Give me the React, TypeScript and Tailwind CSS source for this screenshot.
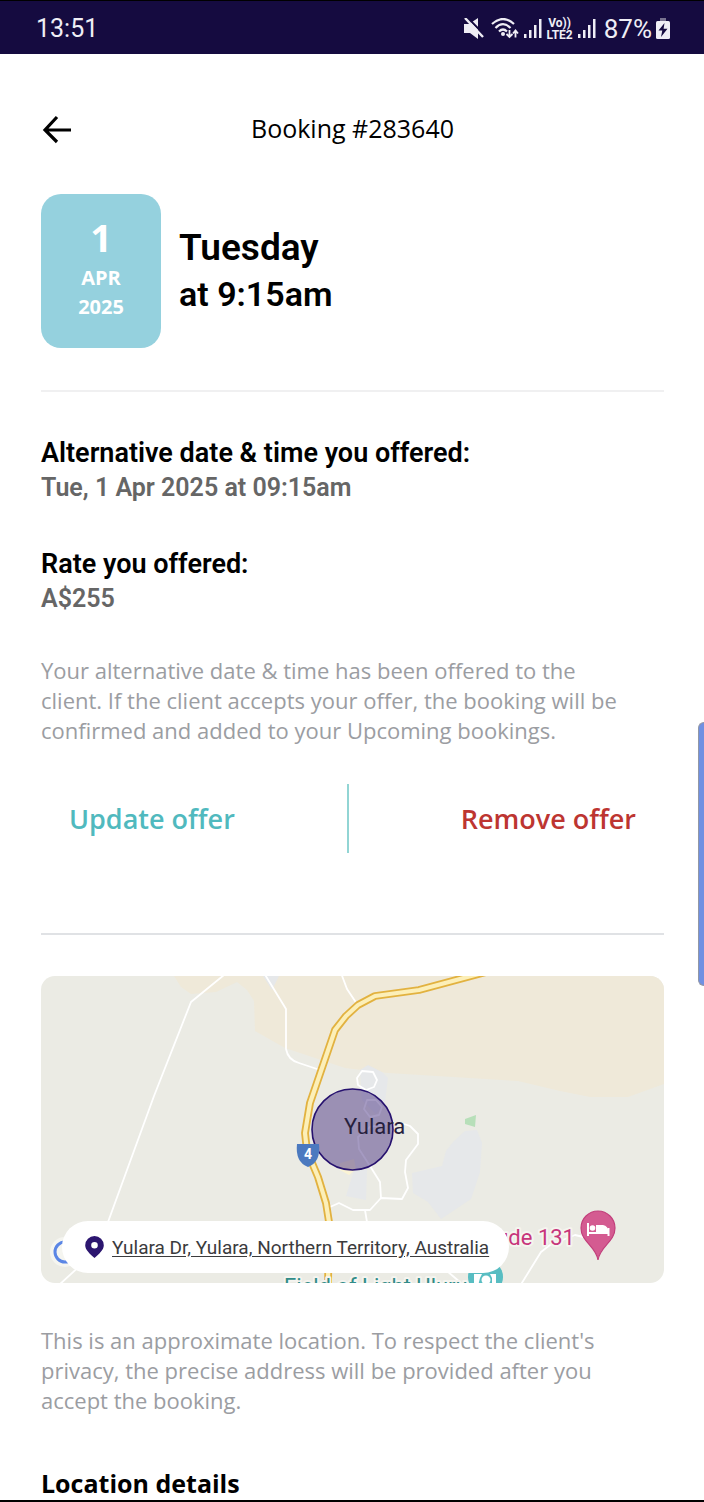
import type { ReactNode } from "react";

function SignalBars() {
  return (
    <svg className="ml-[5px]" width="18" height="20" viewBox="0 0 18 20" fill="#efeef5" aria-hidden="true">
      <rect x="0" y="15" width="2.500" height="4" />
      <rect x="5" y="11" width="2.500" height="8" />
      <rect x="10" y="6" width="2.500" height="13" />
      <rect x="15" y="0" width="2.500" height="19" />
    </svg>
  );
}

function StatusBar() {
  return (
    <header className="flex h-[54px] items-center justify-between border-t border-black bg-[#150b40] pl-9 pr-[34px] pt-[2px] font-['Roboto',sans-serif] text-[25px] leading-8 text-[#efeef5]">
      <span>13:51</span>
      <div className="flex items-center">
        <svg width="20" height="22" viewBox="0 0 20 22" aria-label="Muted">
          <path d="M0 6H5L14 0V21L6 15H0Z" fill="#efeef5" />
          <path d="M3 -1L22 18.500" stroke="#150b40" strokeWidth="2" />
          <path d="M1 0L19 19" stroke="#efeef5" strokeWidth="2.400" />
        </svg>
        <svg className="ml-[7px]" width="28" height="22" viewBox="0 0 28 22" fill="none" aria-label="Wi-Fi">
          <g stroke="#efeef5" strokeWidth="2.200">
            <path d="M1 6Q12 -4 23 6" />
            <path d="M4.500 10Q12 2.500 19.500 10" />
            <path d="M8 13.500Q12 9.500 16 13.500" />
          </g>
          <circle cx="12" cy="16" r="2" fill="#efeef5" />
          <g stroke="#efeef5" strokeWidth="1.800">
            <path d="M18.500 12V18.500M15.500 16L18.500 19L21.500 16" />
            <path d="M24.500 19.500V13M22 15.500L24.500 12.500L27 15.500" />
          </g>
        </svg>
        <SignalBars />
        <span className="ml-1 flex flex-col items-center text-[12px] font-bold leading-[12px]">
          <span>Vo))</span>
          <span>LTE2</span>
        </span>
        <SignalBars />
        <span className="ml-2 text-[26px]">87%</span>
        <svg className="ml-[4px]" width="14" height="22" viewBox="0 0 14 22" aria-label="Charging">
          <rect x="4" y="0" width="6" height="4" fill="#77728f" />
          <rect x="0" y="3" width="14" height="18" rx="1.500" fill="#efeef5" />
          <path d="M8.500 5L2.500 12.500H6.300L5 19L11.500 10.700H7.600Z" fill="#150b40" />
        </svg>
      </div>
    </header>
  );
}

function DateCard() {
  return (
    <div className="flex h-[154px] w-[120px] flex-col items-center rounded-[20px] bg-[#95d1de] pt-[17px] font-bold text-white">
      <span className="text-[38px] leading-[52px]">1</span>
      <span className="text-xl leading-[29px]">APR</span>
      <span className="text-xl leading-[29px]">2025</span>
    </div>
  );
}

function Detail({ label, children }: { label: string; children: ReactNode }) {
  return (
    <div className="font-['Roboto',sans-serif] font-semibold">
      <dt className="text-[27px] leading-9 text-black">{label}</dt>
      <dd className="text-[25px] leading-[34px] text-[#666666]">{children}</dd>
    </div>
  );
}

const HIGHWAY =
  "M486 972L419 990L375 996L358 1005L346 1016L335 1030L310 1103L305 1133L307 1151L318 1177L326 1203L329 1222L328 1286";

function AreaMap() {
  return (
    <svg
      className="block h-full w-full"
      viewBox="41 976 623 307"
      preserveAspectRatio="xMidYMid slice"
      role="img"
      aria-label="Map of Yulara"
    >
      <rect x="41" y="976" width="623" height="307" fill="#ebebe4" />
      {/* Desert */}
      <path
        d="M174 976L181 987L191 994L216 992L237 982L247 990L254 1001L255 1031L285 1048L318 1059L345 1068L388 1073L518 1081L560 1091L590 1097L628 1097L664 1084V976Z"
        fill="#efe9d9"
      />
      {/* Town areas */}
      <g fill="#e6e8ea">
        <path d="M263 976H279L272 990Z" />
        <path d="M360 1070L368 1065L382 1072L388 1078L385 1102L376 1114L362 1100Z" />
        <path d="M453 1142L465 1131L477 1130L482 1143L480 1172L471 1199L441 1219L428 1202L413 1193L412 1173L442 1166L446 1151Z" />
        <path d="M354 1170L367 1170L366 1200L346 1196Z" />
      </g>
      <path d="M340 1163L354 1159L356 1169L349 1175L340 1170Z" fill="#fbf4d4" />
      <path d="M465 1119L476 1115L475 1127L465 1124Z" fill="#b7dfb9" />
      {/* Minor roads */}
      <g fill="none" stroke="#ffffff" strokeWidth="1.800" strokeLinejoin="round">
        <path d="M224 975L191 1002L154 1096L108 1222" />
        <path d="M264 973L286 1009L286 1049Q288 1060 299 1063L320 1070" />
        <path d="M341 973L347 989L357 1004" />
        <path d="M362 1071L373 1072L377 1080L374 1087L366 1090L358 1085L357 1078Z" />
        <path d="M367 1100L376 1100L382 1107L379 1115L370 1117L364 1109Z" />
        <path d="M404 1124L410 1126L418 1134L418 1144L406 1160L405 1172L408 1188L402 1199L381 1198L370 1210L353 1210L339 1203L330 1207" />
        <path d="M381 1198L380 1182L370 1166L359 1149L358 1137L370 1127L390 1123" />
        <path d="M365 1210L367 1222M59 1285L83 1263" />
        <path d="M520 1286L541 1252L550 1245L575 1235L596 1240" />
        <path d="M447 1271L461 1283" />
      </g>
      {/* Highway */}
      <g fill="none" strokeLinejoin="round">
        <path d={HIGHWAY} stroke="#e2b240" strokeWidth="7.800" />
        <path d={HIGHWAY} stroke="#fcefb8" strokeWidth="4.200" />
      </g>
      {/* Approximate location */}
      <circle cx="352.500" cy="1129.500" r="40.500" fill="#422c80" fillOpacity="0.480" stroke="#27126f" strokeWidth="1.600" />
      <path d="M297 1144H319Q321 1162 308 1167Q295 1162 297 1144Z" fill="#4b79bf" />
      <text x="308" y="1159" textAnchor="middle" fill="#ffffff" fontFamily="Roboto, sans-serif" fontSize="14" fontWeight="700">4</text>
      <text x="344" y="1134" fill="#27203d" fontFamily="Roboto, sans-serif" fontSize="22">Yulara</text>
      {/* Places */}
      <circle cx="65" cy="1252" r="15" fill="#f5f5f0" />
      <circle cx="65" cy="1252" r="10" fill="none" stroke="#5b86e5" strokeWidth="3" />
      <text x="575" y="1245" textAnchor="end" fill="#c7357b" stroke="#f5f4ef" strokeWidth="4" strokeLinejoin="round" paintOrder="stroke" fontFamily="Roboto, sans-serif" fontSize="22">ude 131</text>
      <path d="M598 1260C596 1246 581 1242 581 1228A17 17 0 0 1 615 1228C615 1242 600 1246 598 1260Z" fill="#d45b91" stroke="#c23f7b" strokeWidth="1.200" />
      <path d="M588 1223V1236M588 1233H608.500M608.500 1236V1228" stroke="#ffffff" strokeWidth="2" fill="none" />
      <path d="M596 1232V1225H603Q608 1226 609 1232Z" fill="#ffffff" />
      <circle cx="592.500" cy="1228" r="2.800" fill="#ffffff" />
      <text x="284" y="1294" fill="#318c88" stroke="#f5f4ef" strokeWidth="4" strokeLinejoin="round" paintOrder="stroke" fontFamily="Roboto, sans-serif" fontSize="22">Field of Light Uluru</text>
      <circle cx="485.500" cy="1277" r="17.500" fill="#58bdc2" />
      <path d="M474 1274H482L480 1278L478 1286H474ZM490 1274H496V1286H492V1278Z" fill="#ffffff" />
      <circle cx="486" cy="1280" r="4.500" fill="#ffffff" />
    </svg>
  );
}

export default function App() {
  return (
    <div className="relative overflow-hidden border-b-2 border-black bg-white font-['Open_Sans',sans-serif] text-black">
      <StatusBar />
      <main className="pb-px pl-[41px] pr-10">
        <div className="grid h-[140px] grid-cols-[30px_1fr_30px] items-center pt-2">
          <button type="button" aria-label="Back" className="cursor-pointer">
            <svg width="30" height="32" viewBox="0 0 30 32" fill="none" stroke="#000000" strokeWidth="3.200">
              <path d="M30 18H4M16 5L4 18L16 30" />
            </svg>
          </button>
          <h1 className="text-center text-[25px] leading-8">Booking #283640</h1>
        </div>

        <section className="flex items-center gap-[18px] border-b-2 border-[#f0f0f1] pb-[42px]">
          <DateCard />
          <h2 className="font-['Roboto',sans-serif] font-semibold">
            <span className="block text-[37px] leading-[46px]">Tuesday</span>
            <span className="block text-[34px] leading-[46px]">at 9:15am</span>
          </h2>
        </section>

        <dl className="flex flex-col gap-[41px] pt-[43px]">
          <Detail label="Alternative date &amp; time you offered:">Tue, 1 Apr 2025 at 09:15am</Detail>
          <Detail label="Rate you offered:">A$255</Detail>
        </dl>

        <p className="mt-[39px] pr-8 text-[22px] leading-[30px] text-[#9b9da2]">
          Your alternative date &amp; time has been offered to the client. If the client accepts your offer, the
          booking will be confirmed and added to your Upcoming bookings.
        </p>

        <div className="mt-[39px] flex h-[69px] items-center justify-between px-7 text-[27px] font-semibold leading-9">
          <button type="button" className="cursor-pointer text-[#50b9be]">Update offer</button>
          <span className="h-full w-[2px] bg-[#92d5d4]" />
          <button type="button" className="cursor-pointer text-[#bd3531]">Remove offer</button>
        </div>

        <hr className="mt-[80px] border-t-2 border-[#e0e2e5]" />

        <section className="relative mt-[41px] h-[307px] overflow-hidden rounded-[14px]">
          <AreaMap />
          <a href="#directions" className="absolute bottom-[10px] left-[21px] flex h-[52px] items-center gap-2 rounded-full bg-white pl-[23px] pr-5 font-['Roboto',sans-serif] text-[19px] text-[#3b3b3d] underline underline-offset-2">
            <svg width="19" height="22" viewBox="0 0 19 22" aria-hidden="true">
              <path fillRule="evenodd" d="M9.500 0A9.300 9.300 0 0 1 18.800 9.300C18.800 14 14 18 9.500 22C5 18 0.200 14 0.200 9.300A9.300 9.300 0 0 1 9.500 0ZM9.500 6A3.300 3.300 0 1 0 9.500 12.600A3.300 3.300 0 1 0 9.500 6Z" fill="#2c166f" />
            </svg>
            <span className="whitespace-nowrap pt-[2px]">Yulara Dr, Yulara, Northern Territory, Australia</span>
          </a>
        </section>

        <p className="mt-[42px] pr-8 text-[22px] leading-[30px] text-[#9b9da2]">
          This is an approximate location. To respect the client&apos;s privacy, the precise address will be provided
          after you accept the booking.
        </p>
        <h2 className="mt-[52px] text-[25px] font-bold leading-8">Location details</h2>
      </main>
      <span className="absolute right-0 top-[722px] h-[264px] w-[6px] rounded-l-md border-y border-l border-[#9297a5] bg-[#7090e2]" />
    </div>
  );
}
